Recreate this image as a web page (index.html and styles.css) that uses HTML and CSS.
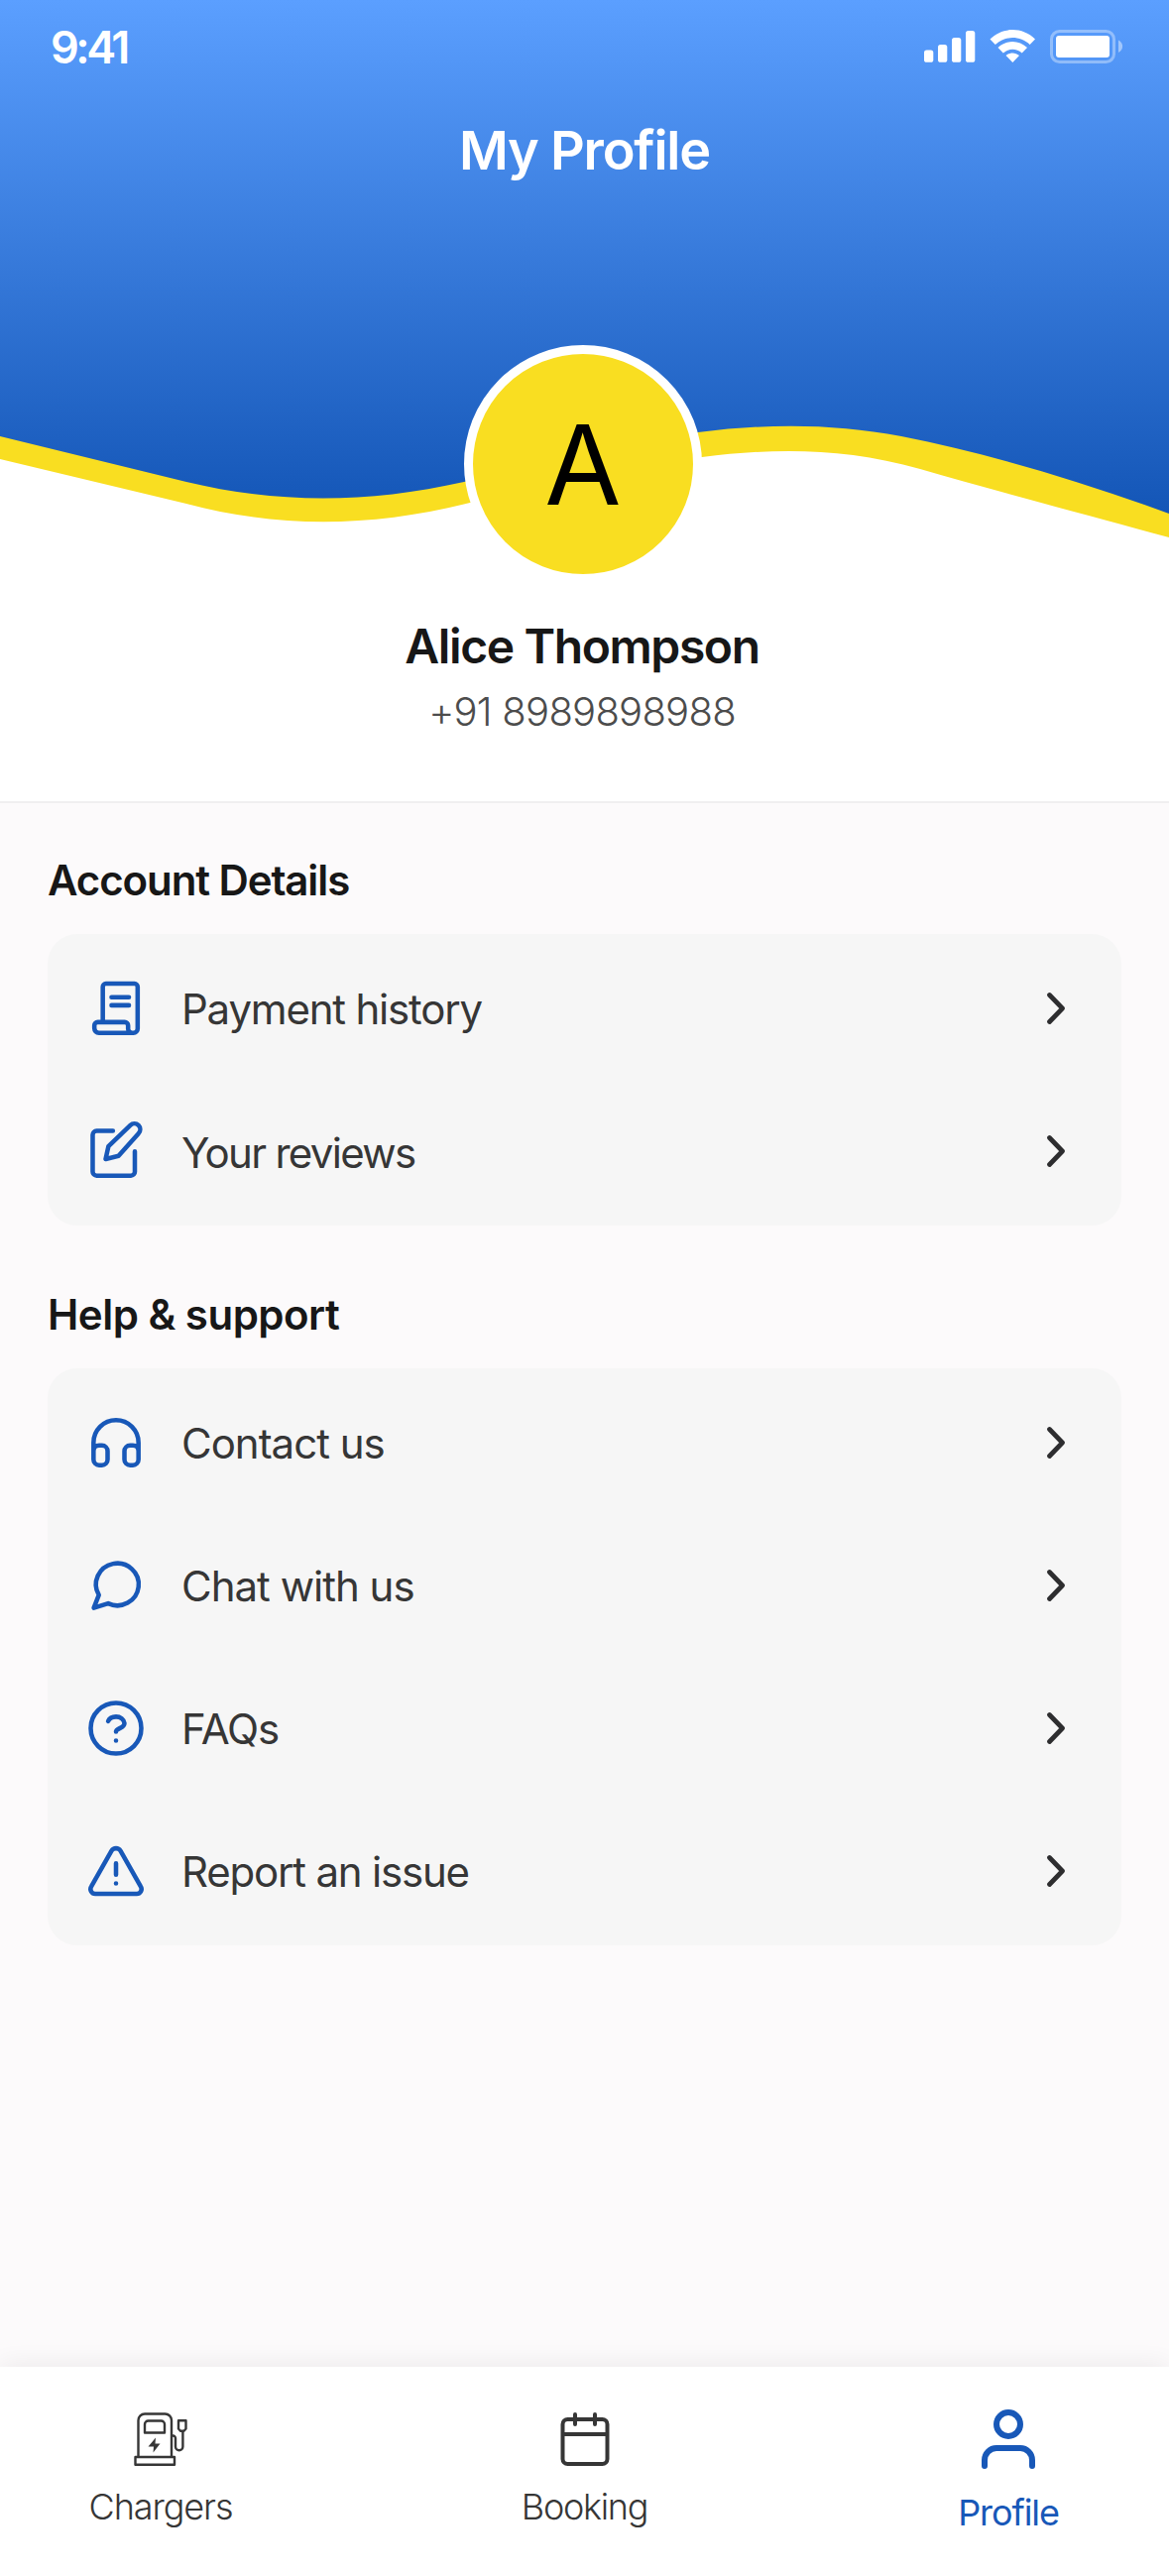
FILE: index.html
```html
<!DOCTYPE html>
<html lang="en">
<head>
<meta charset="utf-8">
<title>My Profile</title>
<link rel="stylesheet" href="styles.css">
</head>
<body>
<div class="screen">
  <header class="hero">
    <svg class="hero-wave" width="1179" height="560" viewBox="0 0 1179 560" aria-hidden="true">
      <defs>
        <linearGradient id="sky" x1="0" y1="0" x2="0" y2="515" gradientUnits="userSpaceOnUse">
          <stop offset="0" stop-color="#5b9fff"/>
          <stop offset="1" stop-color="#1456b7"/>
        </linearGradient>
      </defs>
      <path fill="#f9de21" d="M0 400V463L188 508C282 533 375 532 474 507C570 483 610 470 708 461C780 452 850 451 928 473C1000 494 1080 515 1179 542V400Z"/>
      <path fill="url(#sky)" d="M0 0V440L188 486C280 508 370 508 468 486C560 463 610 446 704 436C775 427 840 427 909 440C995 457 1090 485 1179 518V0Z"/>
    </svg>
    <div class="status-bar">
      <span class="clock">9:41</span>
      <svg width="201" height="36" viewBox="0 0 201 36" fill="#fff" aria-hidden="true">
        <rect x="0" y="21.500" width="9.300" height="12.300" rx="2.600"/>
        <rect x="14" y="16" width="9.300" height="17.800" rx="2.600"/>
        <rect x="28" y="9" width="9.300" height="24.800" rx="2.600"/>
        <rect x="42" y="2" width="9.300" height="31.800" rx="2.600"/>
        <path d="M66.500 10.500C79 -2.200 99.500 -2.200 112 10.500L106.700 16C97 6.800 81.500 6.800 71.800 16ZM74.500 19C83 11 95.500 11 104 19L98.700 24.500C93 19.600 85.500 19.600 79.800 24.500ZM82.500 27C86.500 23.500 92 23.500 96 27L89.300 34Z"/>
        <rect x="128.500" y="2.500" width="63" height="31" rx="8" fill="none" stroke="#fff" stroke-width="3" opacity=".36"/>
        <rect x="133" y="7" width="54" height="22" rx="3"/>
        <path d="M196 11.500C201.500 14 201.500 21.500 196 24Z" opacity=".45"/>
      </svg>
    </div>
    <h1 class="page-title">My Profile</h1>
    <div class="avatar">A</div>
    <div class="name">Alice Thompson</div>
    <div class="phone">+91 8989898988</div>
  </header>

  <main class="content">
    <h2 class="section-title account">Account Details</h2>
    <ul class="card">
      <li class="row">
        <svg class="icon" viewBox="0 0 24 24"><path d="M7.300 16.900V4.300a1.100 1.100 0 0 1 1.100-1.100h10.200a1.100 1.100 0 0 1 1.100 1.100v14.900a1.500 1.500 0 0 1-1.500 1.500H5.900a1.600 1.600 0 0 1-1.600-1.600v-1a1.200 1.200 0 0 1 1.200-1.200h9.600a1.200 1.200 0 0 1 1.200 1.200v1a1.500 1.500 0 0 0 1.500 1.600M10.400 8h6.200M10.400 10.900h6.200"/></svg>
        <span class="label payment">Payment history</span>
        <svg class="chevron" viewBox="0 0 18 32"><path d="M2.500 2.500L15.500 16L2.500 29.500"/></svg>
      </li>
      <li class="row">
        <svg class="icon" viewBox="0 0 24 24"><path d="M10.900 5.200H5.100a1.400 1.400 0 0 0-1.400 1.400v13.100a1.400 1.400 0 0 0 1.400 1.400h12.200a1.400 1.400 0 0 0 1.400-1.400v-7.200M12.900 14.100l-4.600 1.100 1-4.500 7.800-7.500a2 2 0 0 1 2.900 2.900z" transform="translate(0 -.4)"/></svg>
        <span class="label reviews">Your reviews</span>
        <svg class="chevron" viewBox="0 0 18 32"><path d="M2.500 2.500L15.500 16L2.500 29.500"/></svg>
      </li>
    </ul>

    <h2 class="section-title help">Help &amp; support</h2>
    <ul class="card">
      <li class="row">
        <svg class="icon" viewBox="0 0 24 24"><path d="M4 15a2 2 0 0 1 2-2h1a2 2 0 0 1 2 2v3a2 2 0 0 1-2 2H6a2 2 0 0 1-2-2zM15 15a2 2 0 0 1 2-2h1a2 2 0 0 1 2 2v3a2 2 0 0 1-2 2h-1a2 2 0 0 1-2-2zM4 15v-3a8 8 0 0 1 16 0v3"/></svg>
        <span class="label contact">Contact us</span>
        <svg class="chevron" viewBox="0 0 18 32"><path d="M2.500 2.500L15.500 16L2.500 29.500"/></svg>
      </li>
      <li class="row">
        <svg class="icon" viewBox="0 0 24 24"><path d="M4.100 20L5.900 15.400A7.600 7.500 0 1 1 9.200 18.400Z"/></svg>
        <span class="label chat">Chat with us</span>
        <svg class="chevron" viewBox="0 0 18 32"><path d="M2.500 2.500L15.500 16L2.500 29.500"/></svg>
      </li>
      <li class="row">
        <svg class="icon" viewBox="0 0 24 24"><circle cx="12" cy="12" r="9"/><path d="M9.200 9.500A3 2.400 0 0 1 12 7.900A3 2.500 0 0 1 15 10.200C15 12 12 12 12 13.200M12 16.400v.010"/></svg>
        <span class="label faqs">FAQs</span>
        <svg class="chevron" viewBox="0 0 18 32"><path d="M2.500 2.500L15.500 16L2.500 29.500"/></svg>
      </li>
      <li class="row">
        <svg class="icon" viewBox="0 0 24 24"><path d="M10.400 4.800L3.200 17.500a1.700 1.700 0 0 0 1.500 2.600h14.600a1.700 1.700 0 0 0 1.500-2.600L13.600 4.800a1.900 1.900 0 0 0-3.200 0zM12 9.300v4M12 16.400v.010"/></svg>
        <span class="label report">Report an issue</span>
        <svg class="chevron" viewBox="0 0 18 32"><path d="M2.500 2.500L15.500 16L2.500 29.500"/></svg>
      </li>
    </ul>
  </main>

  <nav class="tab-bar">
    <a class="tab">
      <svg width="54" height="54" viewBox="0 0 54 54" fill="none" stroke="#363636" stroke-width="2.400" stroke-linejoin="round"><path d="M4.500 45V8a6.500 6.500 0 0 1 6.500-6.500h20.500A6.500 6.500 0 0 1 38 8v37M1.500 45h39.500v7.700H1.500zM11 20.500v-8.500a3.500 3.500 0 0 1 3.500-3.500h13a3.500 3.500 0 0 1 3.500 3.500v8.500zM38 23.500h1.500a2.500 2.500 0 0 1 2.500 2.500v8.500a3.700 3.700 0 0 0 7.400 0V19M45 8.200h7.500v8.300l-2 2.200h-3.500l-2-2.200z"/><path fill="#363636" stroke="none" d="M22 25.500L14.500 34.500H20L19.500 40.500L26.500 31.500H21.500Z"/></svg>
      <span class="chargers">Chargers</span>
    </a>
    <a class="tab">
      <svg width="54" height="54" viewBox="0 0 54 54" fill="none" stroke="#363636" stroke-width="4" stroke-linecap="round"><rect x="4.500" y="7" width="45" height="45" rx="5"/><path d="M5 22h44M17 2v10M37 2v10"/></svg>
      <span class="booking">Booking</span>
    </a>
    <a class="tab active">
      <svg width="60" height="60" viewBox="0 0 60 60" fill="none" stroke="#1858b8" stroke-width="6" stroke-linecap="round"><circle cx="30" cy="15" r="12"/><path d="M6 57V51a12 12 0 0 1 12-12h24a12 12 0 0 1 12 12v6"/></svg>
      <span class="profile">Profile</span>
    </a>
  </nav>
</div>
</body>
</html>
```
FILE: styles.css
```css
* {
  box-sizing: border-box;
}

body {
  margin: 0;
  font-family: Inter, "Liberation Sans", sans-serif;
  background: #fcfafb;
}

h1, h2, ul {
  margin: 0;
  padding: 0;
  list-style: none;
  font-weight: inherit;
}

.screen {
  display: flex;
  flex-direction: column;
  width: 1179px;
  height: 2598px;
  overflow: hidden;
}

/* Profile header */
.hero {
  position: relative;
  display: flex;
  flex-direction: column;
  align-items: center;
  height: 810px;
  padding-top: 21px;
  background: #fff;
  border-bottom: 2px solid #f0eff0;
}

.hero-wave {
  position: absolute;
  top: 0;
  left: 0;
}

.status-bar,
.page-title,
.avatar {
  position: relative;
}

.status-bar {
  display: flex;
  justify-content: space-between;
  align-items: center;
  width: 100%;
  height: 50px;
  padding: 2px 46px 0 51px;
  color: #fff;
}

.clock {
  font-size: 45px;
  font-weight: 600;
  letter-spacing: -3.5px;
}

.page-title {
  margin-top: 51px;
  font-size: 54px;
  line-height: 60px;
  font-weight: 600;
  letter-spacing: -1.2px;
  color: #fff;
}

.avatar {
  width: 240px;
  height: 240px;
  margin: 166px 3px 0 0;
  border: 9px solid #fff;
  border-radius: 50%;
  background: #f9de21;
  font-size: 112px;
  line-height: 222px;
  text-align: center;
  color: #000;
}

.name {
  margin: 34px 5px 0 0;
  font-size: 48px;
  line-height: 60px;
  font-weight: 600;
  letter-spacing: -1.4px;
  color: #171717;
}

.phone {
  margin: 11px 5px 0 0;
  font-size: 40px;
  line-height: 50px;
  font-weight: 300;
  letter-spacing: -.75px;
  color: #4c4c4c;
}

/* Menu sections */
.content {
  flex: 1;
  padding: 53px 48px 0;
}

.section-title {
  font-size: 42px;
  line-height: 50px;
  font-weight: 600;
  color: #171717;
}

.account {
  letter-spacing: -1.1px;
}

.help {
  letter-spacing: -.5px;
}

.card {
  margin: 29px 0 65px;
  padding: 3px 0;
  border-radius: 30px;
  background: #f6f6f6;
}

.row {
  display: flex;
  align-items: center;
  height: 144px;
  padding: 0 57px 0 35px;
}

.icon {
  width: 68px;
  height: 68px;
  fill: none;
  stroke: #1858b8;
  stroke-width: 1.6;
  stroke-linecap: round;
  stroke-linejoin: round;
}

.label {
  flex: 1;
  margin-left: 32px;
  padding-top: 1px;
  font-size: 42px;
  line-height: 50px;
  letter-spacing: -1.2px;
  color: #363636;
}

.reviews {
  padding-top: 3px;
  letter-spacing: -1.7px;
}

.contact,
.chat {
  letter-spacing: -1px;
}

.chevron {
  width: 18px;
  height: 32px;
  fill: none;
  stroke: #2d2d2f;
  stroke-width: 4.7;
  stroke-linecap: round;
  stroke-linejoin: round;
}

/* Bottom navigation */
.tab-bar {
  display: flex;
  justify-content: space-between;
  height: 211px;
  padding: 0 62px;
  background: #fff;
  box-shadow: 0 -2px 24px rgba(0, 0, 0, .07);
}

.tab {
  display: flex;
  flex-direction: column;
  align-items: center;
  width: 200px;
  padding-top: 46px;
  font-size: 36px;
  line-height: 40px;
  font-weight: 300;
  letter-spacing: -1.1px;
  color: #363636;
}

.tab span {
  margin-top: 21px;
}

.booking {
  letter-spacing: -1.3px;
}

.tab.active {
  padding-top: 43px;
  font-weight: 400;
  color: #1858b8;
}

.tab.active span {
  margin-top: 24px;
}
```
